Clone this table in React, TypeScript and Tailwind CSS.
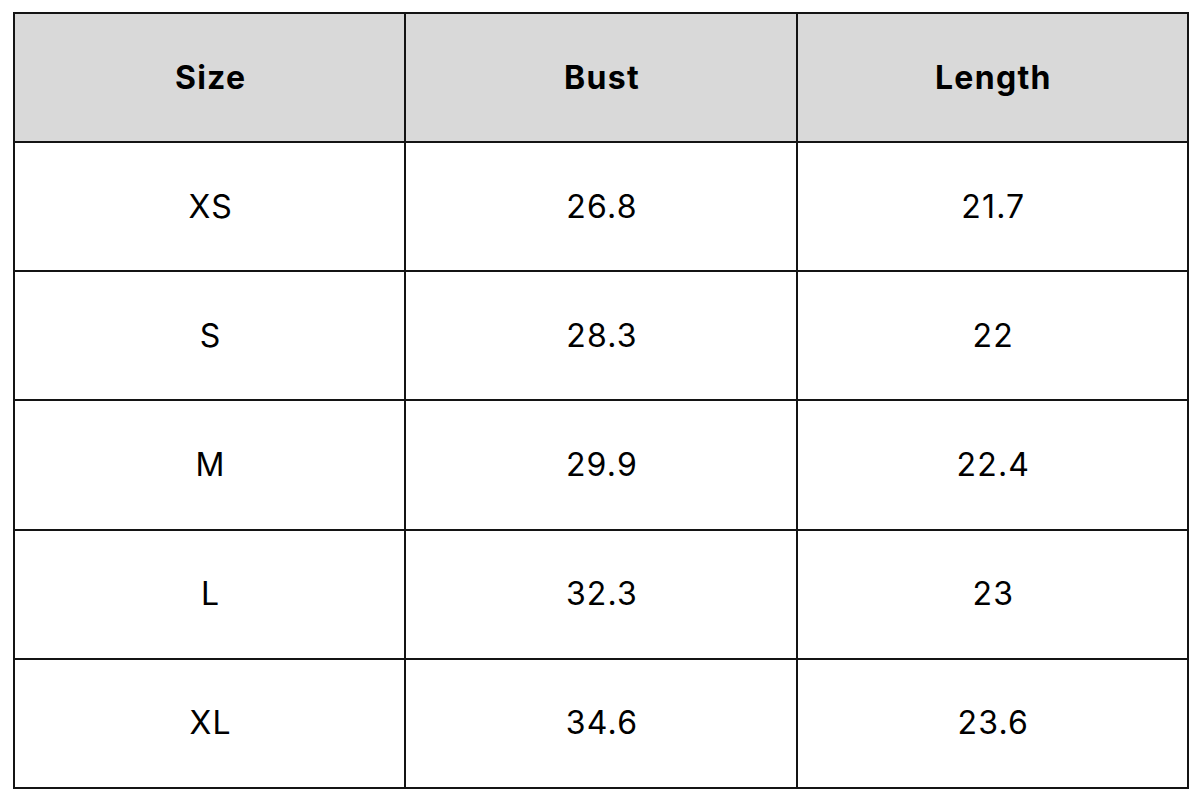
// Size chart table

const rows = [
  ["XS", "26.8", "21.7"],
  ["S", "28.3", "22"],
  ["M", "29.9", "22.4"],
  ["L", "32.3", "23"],
  ["XL", "34.6", "23.6"],
];

export default function App() {
  return (
    <div
      className="w-[1200px] h-[800px] bg-white pl-[13px] pt-[12px]"
      style={{ fontFamily: "Inter, 'Open Sans', sans-serif" }}
    >
      <div className="grid w-[1176px] h-[777px] grid-cols-3 grid-rows-6 gap-[2px] bg-[#141414] p-[2px]">
        {["Size", "Bust", "Length"].map((h) => (
          <div
            key={h}
            className="flex items-center justify-center bg-[#d9d9d9] pl-[2px] text-[32px] font-bold tracking-[1.3px] text-black"
          >
            {h}
          </div>
        ))}
        {rows.map((r) =>
          r.map((c, i) => (
            <div
              key={r[0] + i}
              className="flex items-center justify-center bg-white pl-[2px] text-[32px] tracking-[1.2px] text-black"
            >
              {c}
            </div>
          ))
        )}
      </div>
    </div>
  );
}
